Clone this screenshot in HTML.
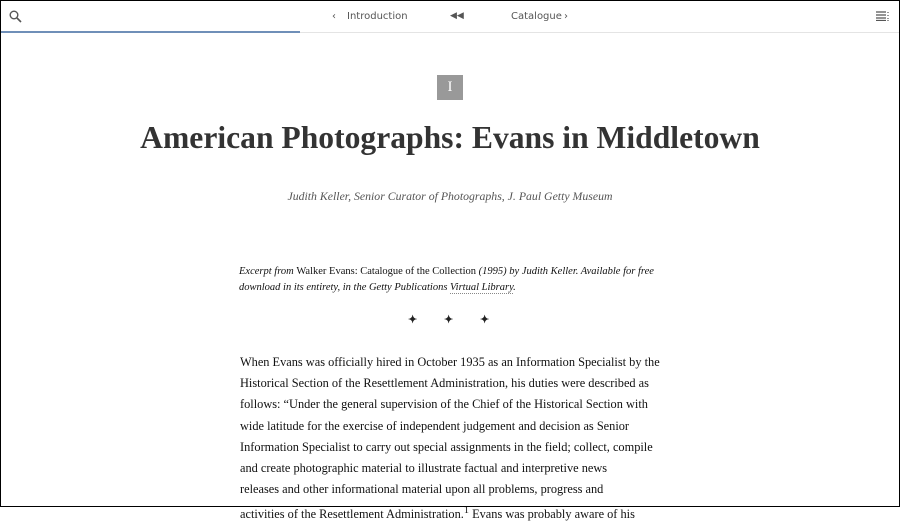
<!DOCTYPE html>
<html><head><meta charset="utf-8"><style>
*{margin:0;padding:0;box-sizing:border-box}
body{width:900px;height:507px;overflow:hidden;background:#fff;font-family:"Liberation Serif",serif;color:#222;position:relative}
.frame{position:absolute;inset:0;border:1px solid #000;pointer-events:none;z-index:5}
.nav{position:absolute;top:0;left:0;width:900px;height:33px;border-bottom:1px solid #e4e4e4;font-family:"DejaVu Sans","Liberation Sans",sans-serif;font-size:10px;color:#555}
.prog{position:absolute;left:1px;top:31px;width:299px;height:2px;background:#6f8fb8}
.nav span{position:absolute;top:11px}
.num{position:absolute;left:437px;top:75px;width:26px;height:25px;background:#999;color:#fff;font-size:15px;text-align:center;line-height:25px}
h1{position:absolute;top:120px;left:0;width:900px;text-align:center;font-size:31.6px;font-weight:bold;color:#333}
.auth{position:absolute;top:189px;width:900px;text-align:center;font-style:italic;font-size:11.8px;color:#555}
.ex{position:absolute;left:239px;top:264px;width:440px;font-size:10.5px;line-height:16px;font-style:italic;color:#111;white-space:nowrap}
.ex .n{font-style:normal}
.ex u{text-decoration:none;border-bottom:1px dotted #888}
.stars{position:absolute;top:313px;left:408px;font-size:11px;letter-spacing:0}
.stars b{display:inline-block;width:36px}
.body{position:absolute;left:240px;top:352px;width:440px;font-size:12.35px;line-height:21.2px;color:#111;white-space:nowrap}
</style></head><body>
<div class="frame"></div>
<div class="nav">
<svg style="position:absolute;left:9px;top:10px" width="13" height="13" viewBox="0 0 13 13"><circle cx="5" cy="5" r="3.8" fill="none" stroke="#555" stroke-width="1.4"/><path d="M8 8l4 4" stroke="#555" stroke-width="1.6"/></svg>
<span style="left:332px">‹</span><span style="left:347px">Introduction</span>
<span style="left:450px;font-size:9px;top:11px">◀◀</span>
<span style="left:511px">Catalogue</span><span style="left:564px">›</span>
<svg style="position:absolute;left:876px;top:11px" width="14" height="10"><path d="M0 1h10M0 4h10M0 7h10M0 9.5h10" stroke="#555" stroke-width="1.2"/><path d="M12 1v1M12 4v1M12 7v1M12 9v1" stroke="#555" stroke-width="1.2"/></svg>
<div class="prog"></div>
</div>
<div class="num">I</div>
<h1>American Photographs: Evans in Middletown</h1>
<div class="auth">Judith Keller, Senior Curator of Photographs, J. Paul Getty Museum</div>
<div class="ex">Excerpt from <span class="n">Walker Evans: Catalogue of the Collection</span> (1995) by Judith Keller. Available for free<br>download in its entirety, in the Getty Publications <u>Virtual Library</u>.</div>
<div class="stars"><b>✦</b><b>✦</b><b>✦</b></div>
<div class="body">When Evans was officially hired in October 1935 as an Information Specialist by the<br>Historical Section of the Resettlement Administration, his duties were described as<br>follows: “Under the general supervision of the Chief of the Historical Section with<br>wide latitude for the exercise of independent judgement and decision as Senior<br>Information Specialist to carry out special assignments in the field; collect, compile<br>and create photographic material to illustrate factual and interpretive news<br>releases and other informational material upon all problems, progress and<br>activities of the Resettlement Administration.<sup>1</sup> Evans was probably aware of his</div>
</body></html>
